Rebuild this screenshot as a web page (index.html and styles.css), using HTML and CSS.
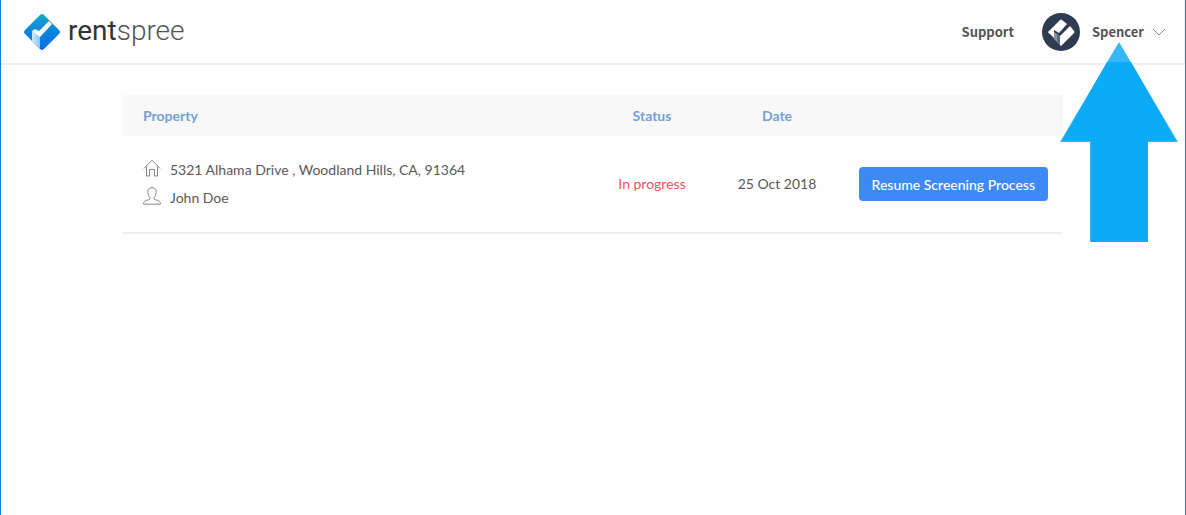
FILE: index.html
```html
<!DOCTYPE html>
<html lang="en">
<head>
    <meta charset="UTF-8">
    <meta name="viewport" content="width=device-width, initial-scale=1.0">
    <title>RentSpree</title>
    <link rel="stylesheet" href="styles.css">
</head>
<body>
    <header class="header">
        <a class="logo" href="#">
            <svg class="logo-mark" viewBox="0 0 38 38" aria-hidden="true">
                <defs>
                    <linearGradient id="mark-fill" x1="0" y1="0" x2="0" y2="1">
                        <stop offset="0" stop-color="#16a9c9"/>
                        <stop offset="0.5" stop-color="#0a84e0"/>
                        <stop offset="1" stop-color="#0a6fe0"/>
                    </linearGradient>
                    <linearGradient id="mark-fold" x1="0" y1="0" x2="1" y2="0">
                        <stop offset="0" stop-color="#d3e9fb"/>
                        <stop offset="1" stop-color="#8cc3f3"/>
                    </linearGradient>
                </defs>
                <path d="M17 2 Q19 0 21 2 L36 17 Q38 19 36 21 L21 36 Q19 38 17 36 L2 21 Q0 19 2 17 Z" fill="url(#mark-fill)"/>
                <path d="M9 18 L17 23 L17 36 L9 28 Z" fill="url(#mark-fold)"/>
                <path d="M9 18 L12 16 L16 18 L26 8 L29 11 L17 24 Z" fill="#fff"/>
            </svg>
            <span class="logo-text"><b>rent</b>spree</span>
        </a>
        <nav class="nav">
            <a class="nav-link" href="#">Support</a>
            <button class="user-menu" type="button">
                <svg class="avatar" viewBox="0 0 38 38" aria-hidden="true">
                    <circle cx="19" cy="19" r="19" fill="#2e3b50"/>
                    <path d="M6 19 L18 7 Q19 6 20 7 L25 11 L17 20 L12 17 L8 21 Z" fill="#fff"/>
                    <path d="M18 23 L28 13 L32 18 Q33 19 32 20 L19 33 L18 32 Z" fill="#fff"/>
                    <path d="M6 19 L12 17 L12 25 Z" fill="#fff"/>
                    <path d="M12 19 L18 23 L18 32 L12 26 Z" fill="#8a93a3"/>
                    <path d="M15 21 L18 23 L18 32 L15 29 Z" fill="#5d687b"/>
                </svg>
                <span>Spencer</span>
                <svg class="chevron" viewBox="0 0 14 8" aria-hidden="true">
                    <path d="M1 1 L7 7 L13 1"/>
                </svg>
            </button>
        </nav>
        <svg class="pointer" viewBox="0 0 118 200" aria-hidden="true">
            <path d="M59 0 L118 100 L88 100 L88 200 L30 200 L30 100 L0 100 Z" fill="#36b7f6"/>
            <path d="M47 20 L71 20 L116 99 L88 99 L88 200 L31 200 L31 99 L2 99 Z" fill="#0daaf5"/>
        </svg>
    </header>

    <main class="content">
        <table class="requests">
            <thead>
                <tr>
                    <th class="col-property">Property</th>
                    <th class="col-status">Status</th>
                    <th class="col-date">Date</th>
                    <th class="col-action"></th>
                </tr>
            </thead>
            <tbody>
                <tr>
                    <td class="col-property">
                        <div class="detail">
                            <svg class="icon" viewBox="0 0 18 18" aria-hidden="true">
                                <path d="M1 9.5 L9 1.2 L17 9.5 M3.5 7.5 V17 H6.5 V10.5 H11.5 V17 H14.5 V7.5"/>
                            </svg>
                            <span>5321 Alhama Drive , Woodland Hills, CA, 91364</span>
                        </div>
                        <div class="detail">
                            <svg class="icon" viewBox="0 0 18 18" aria-hidden="true">
                                <path d="M9 0.7 C5.8 0.7 4.7 2.8 4.9 5.3 C5 7.7 5.6 9.3 7 10.5 V12 C6 13 1 13.5 0.7 15.5 V17.2 H17.3 V15.5 C17 13.5 12 13 11 12 V10.5 C12.4 9.3 13 7.7 13.1 5.3 C13.3 2.8 12.2 0.7 9 0.7 Z"/>
                            </svg>
                            <span>John Doe</span>
                        </div>
                    </td>
                    <td class="col-status in-progress">In progress</td>
                    <td class="col-date">25 Oct 2018</td>
                    <td class="col-action"><button class="resume-btn" type="button">Resume Screening Process</button></td>
                </tr>
            </tbody>
        </table>
    </main>
</body>
</html>
```
FILE: styles.css
```css
* {
    margin: 0;
    padding: 0;
    box-sizing: border-box;
}

body {
    font-family: Lato, sans-serif;
    font-size: 14px;
    line-height: 20px;
    color: #5a5a5a;
    background: #fefefe;
    min-height: 100vh;
    border-left: 1px solid #1a82d8;
    border-right: 1px solid #2c7bc4;
}

.header {
    position: relative;
    display: flex;
    align-items: center;
    justify-content: space-between;
    height: 65px;
    padding: 0 18px 0 22px;
    border-bottom: 2px solid #efefef;
    border-right: 1px solid #efefef;
}

.logo {
    display: flex;
    align-items: center;
    gap: 7px;
    color: #555;
    text-decoration: none;
}

.logo-mark {
    width: 38px;
    height: 38px;
}

.logo-text {
    font-family: Roboto, sans-serif;
    font-size: 28px;
    font-weight: 300;
    line-height: 36px;
    padding-bottom: 2px;
}

.logo-text b {
    font-weight: 400;
    color: #333;
}

.nav {
    display: flex;
    align-items: center;
    gap: 28px;
}

.nav-link,
.user-menu {
    font-family: "Noto Sans CJK SC", sans-serif;
    font-size: 13px;
    font-weight: 700;
    line-height: 20px;
    color: #555;
    text-decoration: none;
}

.user-menu {
    display: flex;
    align-items: center;
    background: none;
    border: none;
    cursor: pointer;
}

.avatar {
    width: 38px;
    height: 38px;
    margin-right: 12px;
}

.chevron {
    width: 14px;
    height: 8px;
    margin-left: 8px;
    fill: none;
    stroke: #888;
}

.pointer {
    position: absolute;
    top: 42px;
    right: 6px;
    width: 118px;
    height: 200px;
    pointer-events: none;
}

.content {
    max-width: 980px;
    margin: 0 auto;
    padding: 30px 20px;
}

.requests {
    width: 100%;
    border-collapse: collapse;
    table-layout: fixed;
}

.requests th {
    height: 41px;
    background: #f8f8f8;
    color: #73a2d6;
    font-weight: 700;
    text-align: center;
}

.requests td {
    height: 97px;
    border-bottom: 2px solid #efefef;
    text-align: center;
}

.requests .col-property {
    padding-left: 20px;
    text-align: left;
}

.col-status {
    width: 126px;
}

.col-date {
    width: 124px;
}

.requests .col-action {
    width: 224px;
    padding-right: 15px;
    text-align: right;
}

.requests .in-progress {
    color: #f5515f;
}

.detail {
    display: flex;
    align-items: center;
    gap: 9px;
    height: 28px;
}

.icon {
    width: 18px;
    height: 18px;
    margin-bottom: 4px;
    fill: none;
    stroke: #888;
}

.resume-btn {
    height: 34px;
    padding: 0 13px;
    border: none;
    border-radius: 4px;
    background: #3d8af7;
    color: #fff;
    font-family: inherit;
    font-size: 14px;
    font-weight: 500;
    cursor: pointer;
}
```
